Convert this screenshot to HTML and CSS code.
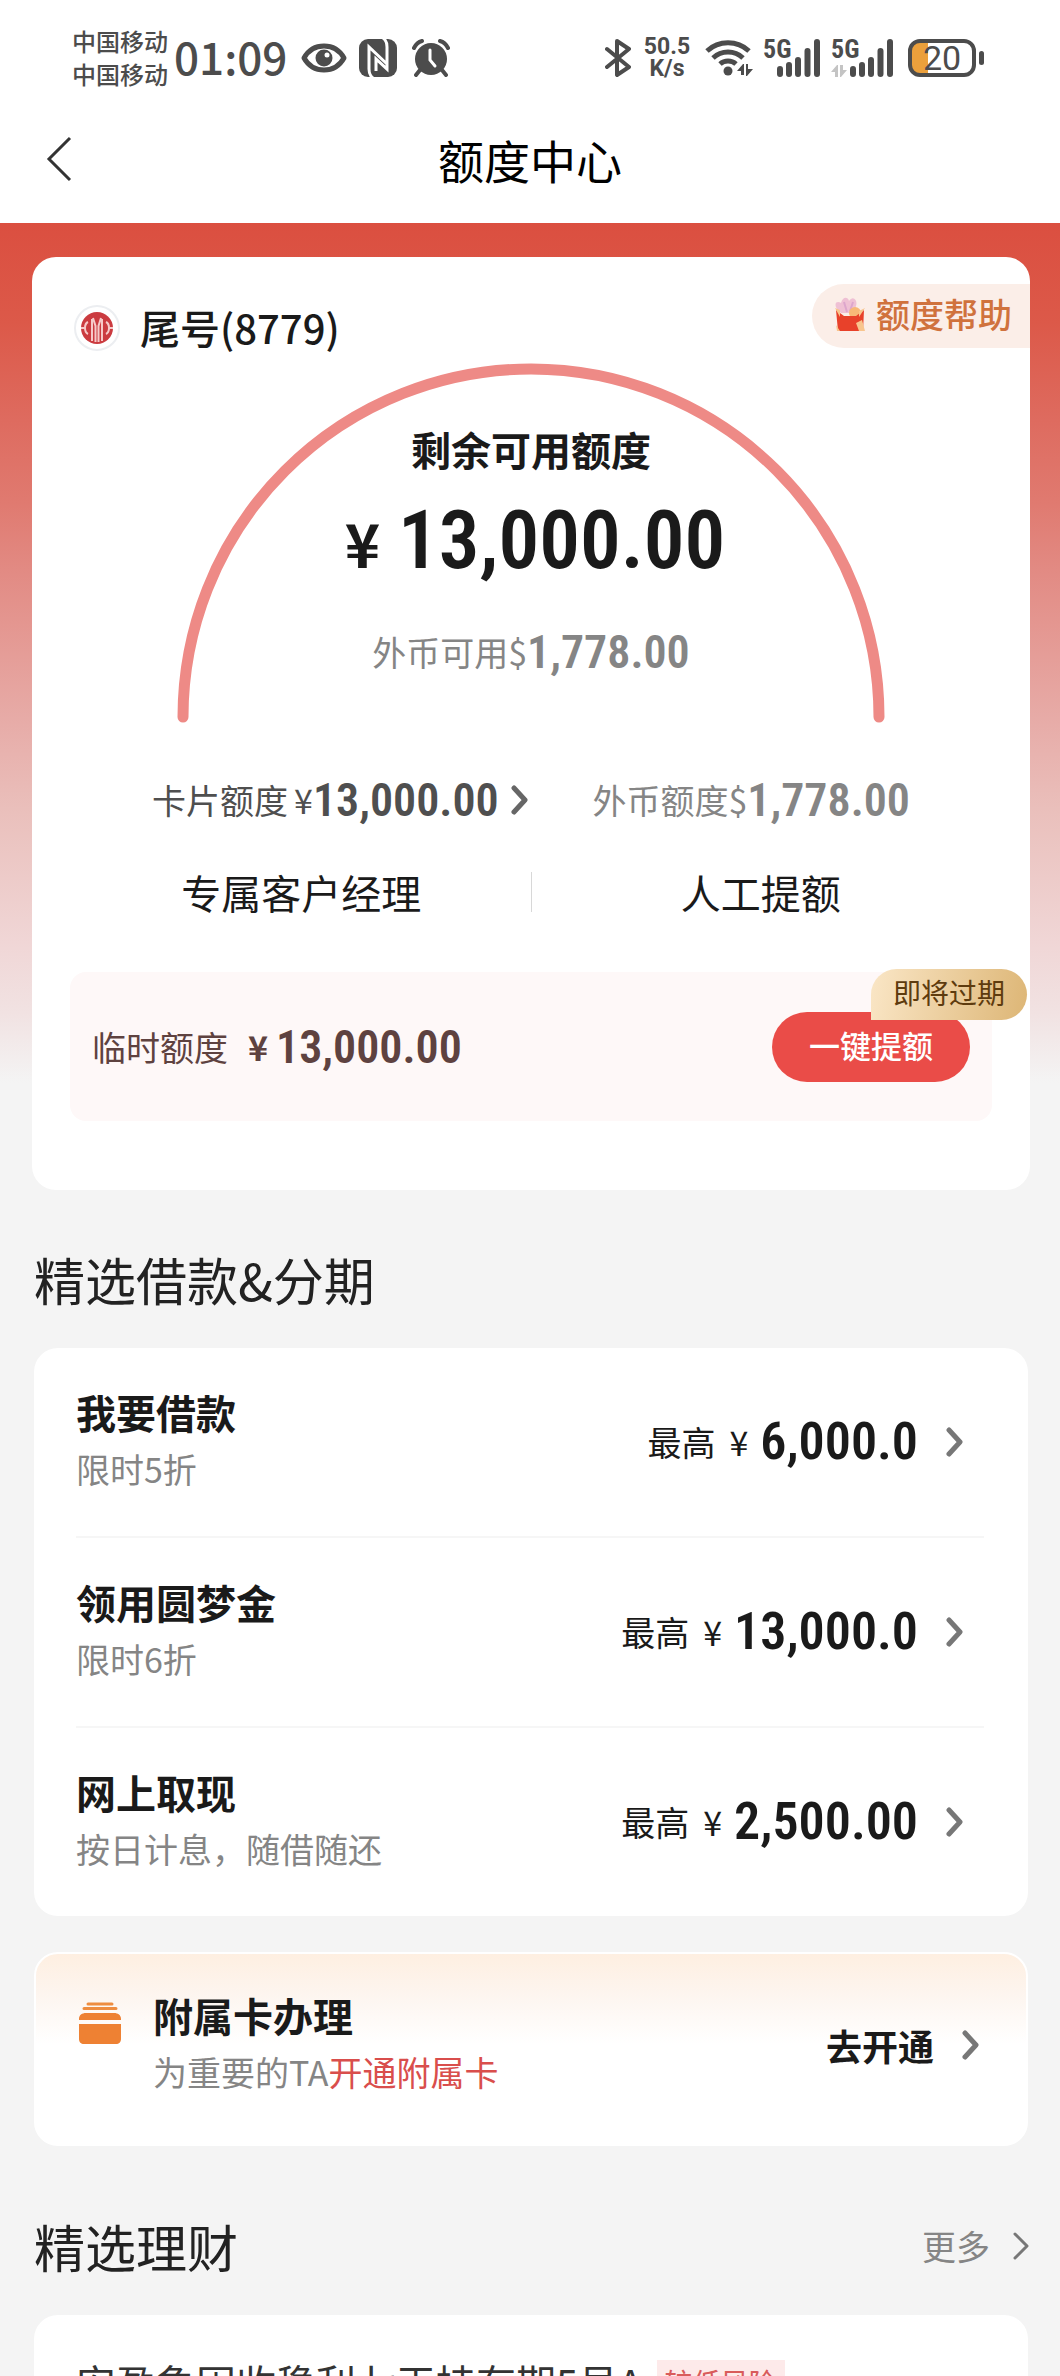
FILE: index.html
```html
<!DOCTYPE html>
<html lang="zh-CN">
<head>
<meta charset="utf-8">
<meta name="viewport" content="width=device-width, initial-scale=1">
<title>额度中心</title>
<link rel="stylesheet" href="styles.css">
</head>
<body>
<svg class="defs" aria-hidden="true">
  <symbol id="chevron" viewBox="0 0 18 32"><path d="M3 4l11 12L3 28" fill="none" stroke="currentColor" stroke-width="5" stroke-linecap="round" stroke-linejoin="round"/></symbol>
  <symbol id="chevron-thin" viewBox="0 0 18 32"><path d="M3 4l12 12L3 28" fill="none" stroke="currentColor" stroke-width="3" stroke-linecap="round" stroke-linejoin="round"/></symbol>
  <symbol id="bars" viewBox="0 0 44 38"><path d="M3 30v5M12 26v9M21 21v14M30.500 12v23M40 3v32" fill="none" stroke="currentColor" stroke-width="6" stroke-linecap="round"/></symbol>
  <symbol id="traffic" viewBox="0 0 16 12"><path d="M0 7L6 0h1v12H4V7zM9 0h3v5h4l-6 7H9z" fill="currentColor"/></symbol>
</svg>
<div class="app">
  <header class="top">
    <div class="status">
      <div class="status-side">
        <div class="carriers"><span>中国移动</span><span>中国移动</span></div>
        <time class="clock">01:09</time>
        <svg class="ic-eye" viewBox="0 0 46 30" aria-hidden="true"><path d="M3 15C12-1 34-1 43 15C34 31 12 31 3 15z" fill="none" stroke="currentColor" stroke-width="5" stroke-linejoin="round"/><circle cx="23" cy="15" r="8.500" fill="currentColor"/><circle cx="26" cy="12" r="2.500" fill="#fff"/></svg>
        <svg class="ic-nfc" viewBox="0 0 38 38" aria-hidden="true"><rect width="38" height="38" rx="9" fill="currentColor"/><path d="M14 39c-3-2-4-5-4-9V8l18 17M24-1c3 2 4 5 4 9v22L17 20v12" fill="none" stroke="#fff" stroke-width="3"/></svg>
        <svg class="ic-alarm" viewBox="0 0 38 38" aria-hidden="true"><circle cx="19" cy="20" r="16" fill="currentColor"/><path d="M2 9c2-4 4-6 8-7M36 9c-2-4-4-6-8-7M8 31l-4 5M30 31l4 5" fill="none" stroke="currentColor" stroke-width="4" stroke-linecap="round"/><path d="M18 11v10l5 6" fill="none" stroke="#fff" stroke-width="3" stroke-linecap="round"/></svg>
      </div>
      <div class="status-side status-right">
        <svg class="ic-bt" viewBox="0 0 26 38" aria-hidden="true"><path d="M2 10l22 18-12 8V2l12 8L2 28" fill="none" stroke="currentColor" stroke-width="4" stroke-linejoin="round" stroke-linecap="round"/></svg>
        <div class="speed"><span>50.5</span><span>K/s</span></div>
        <svg class="ic-wifi" viewBox="0 0 48 38" aria-hidden="true"><g fill="none" stroke="currentColor" stroke-width="5"><path d="M2 12a31 31 0 0 1 42 0"/><path d="M8 19a22 22 0 0 1 30 0"/><path d="M15 25a12 12 0 0 1 16 0"/></g><circle cx="23" cy="32" r="4.500" fill="currentColor"/><path d="M32 32L38 25h1v11h-3v-4zM41 25h2v5h5l-6 7h-1z" fill="currentColor"/></svg>
        <div class="signal"><span>5G</span><svg class="ic-bars" aria-hidden="true"><use href="#bars"/></svg></div>
        <div class="signal"><span>5G</span><svg class="ic-traffic" aria-hidden="true"><use href="#traffic"/></svg><svg class="ic-bars" aria-hidden="true"><use href="#bars"/></svg></div>
        <div class="battery"><span class="battery-body">20</span><span class="battery-tip"></span></div>
      </div>
    </div>
    <nav class="navbar">
      <button class="back" aria-label="返回"><svg viewBox="0 0 26 46" aria-hidden="true"><path d="M24 2L3 23l21 21" fill="none" stroke="currentColor" stroke-width="3"/></svg></button>
      <h1>额度中心</h1>
    </nav>
  </header>

  <main>
    <section class="hero">
      <div class="card quota">
        <div class="quota-top">
          <svg class="bank" viewBox="0 0 46 46" aria-hidden="true"><circle cx="23" cy="23" r="22" fill="#fff" stroke="#eceef1" stroke-width="2"/><circle cx="23" cy="23" r="16" fill="#cb3b40"/><path d="M14 17c-4 2-4 10 0 12M32 17c4 2 4 10 0 12M7 23h4M39 23h-4M18 36V14M28 36V14M21.500 37V21l-2.500-8M24.500 37V21l2.500-8" fill="none" stroke="#f6c9c8" stroke-width="2"/></svg>
          <span class="tail">尾号(8779)</span>
          <a class="help" href="#"><svg viewBox="0 0 32 34" aria-hidden="true"><path d="M3 12C-1 5 4 4 7 6c2-7 7-6 8-2 4-6 9-1 7 5l-2 7H7z" fill="#efc0d4"/><path d="M10 5l3 10M19 5l-3 9" stroke="#dda6cc" stroke-width="2"/><circle cx="21" cy="16" r="6" fill="#f8b877"/><path d="M2 13l8 6h12l8-6-1 21H4z" fill="#e8412a"/><path d="M1 11l5 2v7zM31 11l-6 3v6zM22 26l6-3 3 11h-6zM2 28l4 6H3z" fill="#f8c58d"/></svg>额度帮助</a>
        </div>
        <div class="gauge">
          <svg class="arc" viewBox="0 0 708 360" aria-hidden="true"><path d="M6 354a348 348 0 0 1 696 0" fill="none" stroke="#ee8a86" stroke-width="11" stroke-linecap="round"/></svg>
          <div class="gauge-text">
            <h2>剩余可用额度</h2>
            <p class="total"><span>¥</span><b class="num">13,000.00</b></p>
            <p class="foreign"><span>外币可用$</span><b class="num">1,778.00</b></p>
          </div>
        </div>
        <div class="limits">
          <a class="limit" href="#"><span>卡片额度</span><span class="limit-cur">¥</span><b class="num">13,000.00</b><svg class="chev" aria-hidden="true"><use href="#chevron"/></svg></a>
          <p class="limit muted"><span>外币额度$</span><b class="num">1,778.00</b></p>
        </div>
        <div class="actions"><a href="#">专属客户经理</a><a href="#">人工提额</a></div>
        <div class="temp">
          <span>临时额度</span><span class="temp-cur">¥</span><b class="num">13,000.00</b>
          <div class="raise"><button>一键提额</button><span class="badge">即将过期</span></div>
        </div>
      </div>
    </section>

    <div class="section-head"><h2>精选借款&amp;分期</h2></div>
    <ul class="card loans">
      <li><a href="#"><span class="item"><strong>我要借款</strong><small>限时5折</small></span><span>最高</span><span class="cur">¥</span><b class="num">6,000.0</b><svg class="chev" aria-hidden="true"><use href="#chevron"/></svg></a></li>
      <li><a href="#"><span class="item"><strong>领用圆梦金</strong><small>限时6折</small></span><span>最高</span><span class="cur">¥</span><b class="num">13,000.0</b><svg class="chev" aria-hidden="true"><use href="#chevron"/></svg></a></li>
      <li><a href="#"><span class="item"><strong>网上取现</strong><small>按日计息，随借随还</small></span><span>最高</span><span class="cur">¥</span><b class="num">2,500.00</b><svg class="chev" aria-hidden="true"><use href="#chevron"/></svg></a></li>
    </ul>

    <a class="card extra" href="#">
      <svg class="ic-card" viewBox="0 0 44 42" aria-hidden="true"><path d="M10 2h24M6 6.500h32" stroke="#ee8d40" stroke-width="3" stroke-linecap="round"/><path d="M1 18v-1c0-4 3-6 7-6h28c4 0 7 2 7 6v1zM1 22h42v15c0 3-2 5-5 5H6c-3 0-5-2-5-5z" fill="#ee8133"/></svg>
      <span class="item"><strong>附属卡办理</strong><small>为重要的TA<em>开通附属卡</em></small></span>
      <span class="go">去开通</span><svg class="chev" aria-hidden="true"><use href="#chevron"/></svg>
    </a>

    <div class="section-head"><h2>精选理财</h2><a class="more" href="#">更多<svg class="chev" aria-hidden="true"><use href="#chevron-thin"/></svg></a></div>
    <article class="card fund"><h3>安盈象固收稳利七天持有期5号A</h3><span class="risk">较低风险</span></article>
  </main>
</div>
</body>
</html>
```
FILE: styles.css
```css
* { box-sizing: border-box; }

body {
  margin: 0;
  font-family: "Noto Sans CJK SC", sans-serif;
  font-size: 34px;
  line-height: 48px;
  color: #1a1a1a;
  background: #f4f4f4;
}

h1, h2, h3, p, ul { margin: 0; padding: 0; font-weight: 400; }
ul { list-style: none; }
a { color: inherit; text-decoration: none; }
button { font: inherit; border: 0; padding: 0; background: none; color: inherit; }
svg { display: block; flex: none; }
em { font-style: normal; }

.defs { position: absolute; width: 0; height: 0; }

.app {
  height: 100vh;
  overflow-y: auto;
  scrollbar-width: none;
}

.num {
  font-family: "Liberation Sans Narrow", "Roboto Condensed", Roboto, sans-serif;
  font-size: 46px;
  font-weight: 600;
}

.chev { width: 18px; height: 32px; color: #777; }

/* status bar */
.top { background: #fff; }

.status {
  display: flex;
  justify-content: space-between;
  padding: 25px 76px 0 72px;
  color: #4c4c4c;
}

.status-side { display: flex; align-items: center; height: 66px; }
.carriers { display: flex; flex-direction: column; padding-bottom: 2px; font-size: 24px; line-height: 33px; font-weight: 500; }
.clock { margin: 0 14px 0 6px; padding-bottom: 4px; font-size: 44px; font-weight: 500; }
.ic-eye { width: 46px; height: 30px; margin-right: 12px; }
.ic-nfc { width: 38px; height: 38px; margin-right: 15px; }
.ic-alarm { width: 38px; height: 38px; }
.ic-bt { width: 26px; height: 38px; margin-right: 10px; }

.speed {
  display: flex;
  flex-direction: column;
  width: 52px;
  margin-right: 12px;
  font: 700 23px/22px Roboto, sans-serif;
  text-align: center;
}

.ic-wifi { width: 48px; height: 38px; margin-right: 10px; }

.signal {
  position: relative;
  display: flex;
  justify-content: flex-end;
  width: 58px;
  height: 38px;
  margin-right: 10px;
}

.signal + .signal { width: 63px; margin-right: 14px; }
.signal span { position: absolute; left: 0; top: 0; font: 700 26px/20px "Liberation Sans Narrow", "Roboto Condensed", sans-serif; }
.ic-bars { width: 44px; height: 38px; }
.ic-traffic { position: absolute; left: 0; bottom: 0; width: 16px; height: 12px; color: #c4c4c4; }

.battery { display: flex; align-items: center; gap: 3px; }

.battery-body {
  width: 68px;
  height: 38px;
  border: 4px solid #4c4c4c;
  border-radius: 12px;
  background: linear-gradient(90deg, #eba03c 16px, #fff 16px);
  font: 400 34px/30px Roboto, sans-serif;
  text-align: center;
}

.battery-tip { width: 5px; height: 14px; border-radius: 3px; background: #4c4c4c; }

/* navigation bar */
.navbar {
  position: relative;
  display: flex;
  align-items: center;
  justify-content: center;
  height: 132px;
  padding-top: 4px;
}

.navbar h1 { font-size: 46px; line-height: 64px; color: #000; }
.back { position: absolute; left: 46px; color: #333; }
.back svg { width: 26px; height: 46px; }

/* quota card */
.hero {
  padding: 34px 30px 0 32px;
  background: linear-gradient(#db4f40 0, #dc5949 100px, #de6b5f 197px, #e07a70 280px, #e28b84 350px, #e49690 400px, #e7aca8 500px, #eac0bc 590px, #f0d6d6 720px, #f1e2e2 790px, #f4f4f4 860px);
}

.card { background: #fff; border-radius: 24px; }
.quota { padding-bottom: 69px; }

.quota-top {
  display: flex;
  align-items: flex-start;
  padding: 27px 0 0 42px;
}

.bank { width: 46px; height: 46px; margin: 21px 20px 0 0; }
.tail { margin-top: 19px; font-size: 40px; font-weight: 500; }

.help {
  display: flex;
  align-items: center;
  gap: 10px;
  height: 64px;
  margin-left: auto;
  padding: 0 18px 4px 22px;
  border-radius: 32px 0 0 32px;
  background: #fbeee8;
  color: #d0723d;
  font-weight: 500;
}

.help svg { width: 32px; height: 34px; }

.gauge { display: grid; justify-items: center; margin-top: 12px; }
.arc, .gauge-text { grid-area: 1 / 1; }
.arc { width: 708px; height: 360px; }
.gauge-text { display: flex; flex-direction: column; align-items: center; padding-top: 58px; }
.gauge-text h2 { font-size: 40px; line-height: 56px; font-weight: 700; }

.total { display: flex; align-items: baseline; gap: 18px; line-height: 96px; margin-top: 16px; padding-left: 8px; }
.total span { font-size: 60px; font-weight: 700; }
.total .num { font-size: 81px; }

.foreign { display: flex; align-items: center; margin-top: 38px; color: #858585; }

.limits { display: flex; justify-content: space-between; margin-top: 53px; padding: 0 120px; color: #4f4f4f; }
.limit { display: flex; align-items: center; }
.limit-cur { margin-left: 6px; }
.limit .chev { margin-left: 12px; color: #666; }
.limit.muted { color: #858585; }

.actions {
  display: flex;
  margin: 48px 40px 0;
  font-size: 40px;
  line-height: 40px;
}

.actions a { flex: 1; text-align: center; }
.actions a + a { border-left: 1px solid #d8d8d8; }

.temp {
  display: flex;
  align-items: center;
  height: 149px;
  margin: 60px 38px 0;
  padding: 0 22px;
  border-radius: 16px;
  background: #fef8f8;
  color: #5e4240;
}

.temp-cur { margin: 0 8px 0 20px; font-weight: 700; }
.raise { position: relative; margin-left: auto; }

.raise button {
  display: block;
  width: 198px;
  height: 70px;
  border-radius: 35px;
  background: #ea4c48;
  color: #fff;
  font-size: 31px;
  line-height: 66px;
  padding-bottom: 4px;
  font-weight: 500;
}

.badge {
  position: absolute;
  right: -57px;
  bottom: 62px;
  width: 156px;
  padding-bottom: 4px;
  border-radius: 26px 26px 26px 0;
  background: linear-gradient(100deg, #fae6c6, #ddb676);
  color: #5e3b0e;
  font-size: 28px;
  line-height: 47px;
  text-align: center;
}

/* section titles */
.section-head {
  display: flex;
  align-items: center;
  justify-content: space-between;
  padding: 52px 30px 32px 34px;
}

.section-head h2 { font-size: 51px; line-height: 74px; color: #222; }
.more { display: flex; align-items: center; gap: 22px; color: #858585; }

/* loan list */
.loans, .extra, .fund { margin: 0 32px 0 34px; }
.loans { padding: 0 44px 0 42px; }
.loans li + li { border-top: 2px solid #f6f6f6; }
.loans a { display: flex; align-items: center; height: 188px; padding-right: 20px; }

.item { display: flex; flex-direction: column; flex: 1; padding-bottom: 4px; }
.item strong { font-size: 40px; line-height: 58px; font-weight: 700; }
.item small { font-size: 34px; line-height: 56px; color: #858585; }
.item em { color: #d94e4c; }

.cur { margin: 0 12px 0 14px; }
.loans .num { font-size: 52px; }
.loans .chev { margin-left: 28px; }

/* supplementary card */
.extra {
  display: flex;
  align-items: center;
  height: 194px;
  margin-top: 36px;
  margin-bottom: 11px;
  padding: 0 46px 8px 42px;
  border: 2px solid #fff;
  background: linear-gradient(#feefe1, #fdf5ef 40px, #fff 90px);
}

.ic-card { width: 44px; height: 42px; margin: 0 31px 44px 0; }
.go { margin-right: 28px; font-size: 36px; font-weight: 700; }

/* wealth products */
.fund { display: flex; align-items: center; gap: 14px; padding: 38px 42px; }
.fund h3 { font-size: 40px; line-height: 58px; color: #333; }
.risk { padding: 0 8px; background: #fdeaea; color: #d95b5b; font-size: 28px; line-height: 44px; }
```
